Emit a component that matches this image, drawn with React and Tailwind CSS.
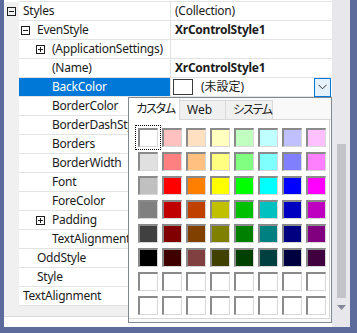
import { useState } from 'react'

const rows = [
  { name: 'Styles', level: 0, exp: 'minus', value: '(Collection)' },
  { name: 'EvenStyle', level: 1, exp: 'minus', value: 'XrControlStyle1', bold: true },
  { name: '(ApplicationSettings)', level: 2, exp: 'plus' },
  { name: '(Name)', level: 2, value: 'XrControlStyle1', bold: true },
  { name: 'BackColor', level: 2, selected: true, color: true },
  { name: 'BorderColor', level: 2 },
  { name: 'BorderDashStyle', level: 2 },
  { name: 'Borders', level: 2 },
  { name: 'BorderWidth', level: 2 },
  { name: 'Font', level: 2 },
  { name: 'ForeColor', level: 2 },
  { name: 'Padding', level: 2, exp: 'plus' },
  { name: 'TextAlignment', level: 2 },
  { name: 'OddStyle', level: 1 },
  { name: 'Style', level: 1 },
  { name: 'TextAlignment', level: 0 },
]

const palette = [
  ['#ffffff', '#ffc0c0', '#ffe0c0', '#ffffc0', '#c0ffc0', '#c0ffff', '#c0c0ff', '#ffc0ff'],
  ['#e0e0e0', '#ff8080', '#ffc080', '#ffff80', '#80ff80', '#80ffff', '#8080ff', '#ff80ff'],
  ['#c0c0c0', '#ff0000', '#ff8000', '#ffff00', '#00ff00', '#00ffff', '#0000ff', '#ff00ff'],
  ['#808080', '#c00000', '#c04000', '#c0c000', '#00c000', '#00c0c0', '#0000c0', '#c000c0'],
  ['#404040', '#800000', '#804000', '#808000', '#008000', '#008080', '#000080', '#800080'],
  ['#000000', '#400000', '#804040', '#404000', '#004000', '#004040', '#000040', '#400040'],
  ['#ffffff', '#ffffff', '#ffffff', '#ffffff', '#ffffff', '#ffffff', '#ffffff', '#ffffff'],
  ['#ffffff', '#ffffff', '#ffffff', '#ffffff', '#ffffff', '#ffffff', '#ffffff', '#ffffff'],
]

function Expander({ kind }) {
  return (
    <div className="w-[9px] h-[9px] border border-[#1e1e1e] flex items-center justify-center relative shrink-0">
      <div className="w-[5px] h-px bg-[#1e1e1e]" />
      {kind === 'plus' && <div className="absolute w-px h-[5px] bg-[#1e1e1e]" />}
    </div>
  )
}

function Row({ row }) {
  return (
    <div className="flex h-[19px]">
      <div className="w-[15px] bg-[#f0f0f0] flex items-center pl-[3px]">
        {row.level === 0 && row.exp && <Expander kind={row.exp} />}
      </div>
      <div
        className={`w-[152px] flex items-center border-b border-r border-[#e3e3e3] whitespace-nowrap overflow-hidden ${
          row.selected ? 'bg-[#0078d7] text-white' : ''
        } ${row.level === 0 ? 'pl-[4px]' : row.level === 1 ? 'pl-[2px]' : 'pl-[17px]'}`}
      >
        {row.level > 0 && (
          <div className="w-4 shrink-0 flex items-center">{row.exp && <Expander kind={row.exp} />}</div>
        )}
        <span>{row.name}</span>
      </div>
      <div className="flex-1 flex items-center border-b border-[#e3e3e3] whitespace-nowrap">
        {row.color ? (
          <div className="flex-1 flex items-center h-full">
            <div className="ml-[2px] w-[20px] h-[16px] border border-[#3c3c3c] bg-white" />
            <span className="ml-[8px] tracking-normal">(未設定)</span>
            <div className="ml-auto mr-px h-[19px] w-[17px] border border-[#0078d7] bg-[#e5f1fb] flex items-center justify-center">
              <svg width="9" height="6" viewBox="0 0 9 6">
                <path d="M0.5 0.8 L4.5 4.8 L8.5 0.8" fill="none" stroke="#333" strokeWidth="1" />
              </svg>
            </div>
          </div>
        ) : (
          <span className={`pl-[4px] ${row.bold ? 'font-bold' : ''}`}>{row.value}</span>
        )}
      </div>
    </div>
  )
}

function ColorPopup() {
  const [tab, setTab] = useState('custom')
  const tabs = [
    { id: 'custom', label: 'カスタム', w: 'w-[51px]' },
    { id: 'web', label: 'Web', w: 'w-[46px]' },
    { id: 'system', label: 'システム', w: 'w-[47px]' },
  ]
  return (
    <div className="absolute left-[124px] top-[97px] w-[204px] h-[226px] border border-[#828790] bg-[#f9f9f9] flex flex-col">
      <div className="flex items-end h-[22px] shrink-0">
        {tabs.map((t) => (
          <div
            key={t.id}
            onClick={() => setTab(t.id)}
            className={`${t.w} flex items-center pl-[7px] whitespace-nowrap tracking-[-2.5px] ${
              tab === t.id
                ? 'h-[22px] bg-white border-r border-[#d9d9d9]'
                : 'h-[20px] bg-[#f0f0f0] border-t border-r border-b border-[#d9d9d9]'
            }`}
          >
            <span className={t.id === 'web' ? 'tracking-normal' : ''}>{t.label}</span>
          </div>
        ))}
        <div className="flex-1 h-px bg-[#d9d9d9]" />
      </div>
      <div className="flex-1 bg-white border-r border-b border-[#d9d9d9] mr-px mb-[3px] pl-[9px] pt-[8px]">
        <div className="grid grid-cols-8 gap-x-1 gap-y-[5px] w-max">
          {palette.flat().map((c, i) => (
            <div
              key={i}
              className={`w-5 h-[19px] border-t-2 border-l-2 border-r border-b border-t-[#8a8a8a] border-l-[#8a8a8a] border-r-[#d8d8d8] border-b-[#d8d8d8] ${
                i === 0 ? 'outline-1 outline-dotted outline-black outline-offset-[2px]' : ''
              }`}
              style={{ backgroundColor: c }}
            />
          ))}
        </div>
      </div>
    </div>
  )
}

export default function App() {
  return (
    <div className="w-[357px] h-[333px] bg-[#5c6a9c] pl-1 pr-[7px] pb-[6px] flex font-['Segoe_UI','Noto_Sans','Noto_Sans_CJK_JP',sans-serif] text-[12px] tracking-[-0.25px] text-[#1b1b1b] leading-none">
      <div className="flex-1 flex relative bg-white">
        <div className="flex-1 flex flex-col">
          <div className="h-[2px] border-b border-[#e3e3e3] ml-[15px]" />
          {rows.map((r, i) => (
            <Row key={i} row={r} />
          ))}
          <div className="h-[10px] bg-[#f0f0f0]" />
          <div className="flex-1 bg-white border-t border-[#dcdcdc]" />
        </div>
        <div className="w-[18px] bg-[#e8e8ec] flex flex-col items-center">
          <div className="h-[144px]" />
          <div className="w-[9px] h-[154px] bg-[#c2c3c9]" />
          <svg width="9" height="5" viewBox="0 0 9 5" className="mt-[7px]">
            <path d="M0 0 L9 0 L4.5 5 Z" fill="#868999" />
          </svg>
        </div>
        <ColorPopup />
      </div>
    </div>
  )
}
